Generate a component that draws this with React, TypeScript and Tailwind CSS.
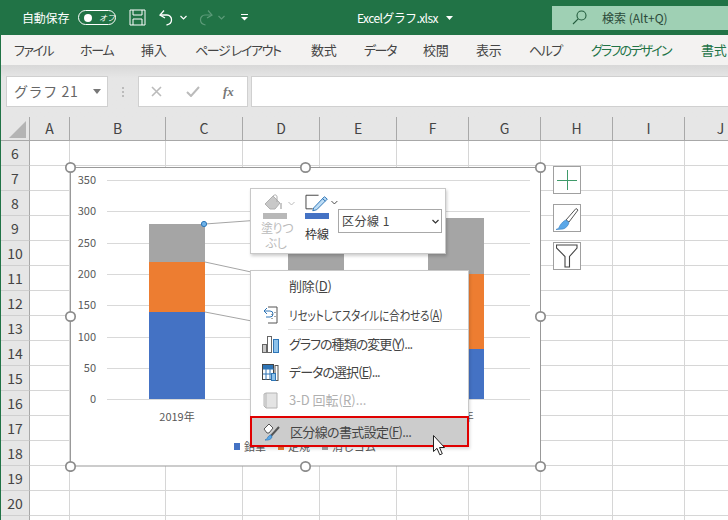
import { ReactNode } from 'react';

const FONT = "font-['Noto_Sans_CJK_JP','Noto_Sans',sans-serif]";

const tabs = [
  { label: 'ファイル', w: 'w-[38px]', t: 'tracking-[-1.5px]' },
  { label: 'ホーム', w: 'w-[33px]', t: 'tracking-[-1.3px]' },
  { label: '挿入', w: 'w-[26px]', t: 'tracking-[-0.3px]' },
  { label: 'ページ レイアウト', w: 'w-[88px]', t: 'tracking-[-1.4px]' },
  { label: '数式', w: 'w-[25px]', t: 'tracking-[-0.3px]' },
  { label: 'データ', w: 'w-[31px]', t: 'tracking-[-1.5px]' },
  { label: '校閲', w: 'w-[25px]', t: 'tracking-[-0.3px]' },
  { label: '表示', w: 'w-[25px]', t: 'tracking-[-0.3px]' },
  { label: 'ヘルプ', w: 'w-[34px]', t: 'tracking-[-1.5px]' },
  { label: 'グラフのデザイン', w: 'w-[82px]', t: 'tracking-[-1.8px]', green: true },
  { label: '書式', w: 'w-[26px]', t: 'tracking-[-0.3px]', green: true },
];

const columns = [
  { name: 'A', w: 'w-[40px]' },
  { name: 'B', w: 'w-[96px]' },
  { name: 'C', w: 'w-[77px]' },
  { name: 'D', w: 'w-[77px]' },
  { name: 'E', w: 'w-[77px]' },
  { name: 'F', w: 'w-[72px]' },
  { name: 'G', w: 'w-[72px]' },
  { name: 'H', w: 'w-[72px]' },
  { name: 'I', w: 'w-[72px]' },
  { name: 'J', w: 'w-[72px]' },
];

const rows = [6, 7, 8, 9, 10, 11, 12, 13, 14, 15, 16, 17, 18, 19, 20, 21];

const axis = [
  { label: '350', y: 180 },
  { label: '300', y: 211 },
  { label: '250', y: 243 },
  { label: '200', y: 274 },
  { label: '150', y: 305 },
  { label: '100', y: 337 },
  { label: '50', y: 368 },
  { label: '0', y: 399 },
];

// the middle bar sits behind the menu, its label is never seen
const bars = [
  { x: 149, gray: 224, orange: 262, blue: 312, label: '2019年' },
  { x: 288, gray: 240, orange: 300, blue: 349, label: '' },
  { x: 428, gray: 218, orange: 274, blue: 349, label: '2021年' },
];

const handles = [
  [70, 167], [305, 167], [540, 167],
  [70, 316], [540, 316],
  [70, 466], [305, 466], [540, 466],
];

function TitleBar() {
  return (
    <div className="flex h-[35px] items-center bg-[#217346] text-white">
      <span className="ml-[21px] w-[48px] whitespace-nowrap text-[12px] tracking-[-0.2px]">自動保存</span>
      <div className="ml-[8px] flex h-[15px] w-[38px] items-center rounded-full border border-white pl-[5px]">
        <div className="size-[8px] rounded-full bg-white" />
        <span className="ml-[7px] text-[8px] italic leading-none">オフ</span>
      </div>
      <svg className="ml-[13px]" width="17" height="17" viewBox="0 0 17 17" fill="none" stroke="white" strokeWidth="1">
        <path d="M1 1H16V16H1Z" />
        <path d="M4 1V6H13V1M4 16V10H13V16" />
      </svg>
      <svg className="ml-[12px]" width="17" height="17" viewBox="0 0 17 17" fill="none" stroke="white" strokeWidth="1.3">
        <path d="M6 1.5 2 6l5 3" />
        <path d="M2.5 6H9a4.6 4.6 0 0 1 4.5 5c0 3-2.5 4.500-5 5" />
      </svg>
      <svg className="ml-[5px]" width="7" height="5" viewBox="0 0 7 5" fill="none" stroke="white" strokeWidth="1.2">
        <path d="M.5 1 3.500 4 6.500 1" />
      </svg>
      <svg className="ml-[10px]" width="17" height="17" viewBox="0 0 17 17" fill="none" stroke="#5b9a78" strokeWidth="1.2">
        <path d="M11 1.500 15 6l-5 3" />
        <path d="M14.500 6H8a4.600 4.600 0 0 0-4.500 5c0 3 2.500 4.500 5 5" />
      </svg>
      <svg className="ml-[4px]" width="7" height="5" viewBox="0 0 7 5" fill="none" stroke="#5b9a78" strokeWidth="1.2">
        <path d="M.5 1 3.500 4 6.500 1" />
      </svg>
      <svg className="ml-[16px]" width="7" height="7" viewBox="0 0 7 7" fill="white">
        <path d="M0 0H7V1H0Z" />
        <path d="M0 3H7L3.500 6.500Z" />
      </svg>
      <span className="ml-[109px] w-[83px] whitespace-nowrap text-[12px] tracking-[-0.6px]">Excelグラフ.xlsx</span>
      <svg className="ml-[6px]" width="7" height="4" viewBox="0 0 7 4" fill="white">
        <path d="M0 0H7L3.500 4Z" />
      </svg>
      <div className="ml-[99px] flex h-[24px] flex-1 items-center bg-[#9fd0b4] text-[#2b4a39]">
        <svg className="ml-[20px]" width="15" height="15" viewBox="0 0 15 15" fill="none" stroke="#235c3d" strokeWidth="1.1">
          <circle cx="9.500" cy="5.500" r="4.500" />
          <path d="M6.200 8.800 1 14" />
        </svg>
        <span className="ml-[15px] whitespace-nowrap text-[12px]">検索 (Alt+Q)</span>
      </div>
    </div>
  );
}

function RibbonTabs() {
  return (
    <div className="flex h-[30px] items-center gap-x-[28px] overflow-hidden bg-[#f3f2f1] pl-[13px]">
      {tabs.map((tab) => (
        <span
          key={tab.label}
          className={`${tab.w} ${tab.t} shrink-0 whitespace-nowrap text-[13px] [font-feature-settings:'palt'] ${
            tab.green ? 'text-[#217346]' : 'text-[#444]'
          }`}
        >
          {tab.label}
        </span>
      ))}
    </div>
  );
}

function FormulaBar() {
  return (
    <div className="flex h-[52px] items-center bg-gradient-to-b from-[#d8d8d8] via-[#e6e6e6] via-[25%] to-[#e6e6e6] pl-[5px] pt-[1px]">
      <div className="flex h-[31px] w-[102px] items-center justify-between border border-[#d0d0d0] bg-white pl-[7px] pr-[6px]">
        <span className="whitespace-nowrap text-[14px] tracking-[0.6px] text-[#666]">グラフ 21</span>
        <svg width="8" height="5" viewBox="0 0 8 5" fill="#777">
          <path d="M0 0H8L4 5Z" />
        </svg>
      </div>
      <div className="ml-[14px] flex w-[2px] flex-col gap-[2px]">
        <div className="h-[2px] bg-[#bbb]" />
        <div className="h-[2px] bg-[#bbb]" />
        <div className="h-[2px] bg-[#bbb]" />
      </div>
      <div className="ml-[14px] flex h-[31px] w-[110px] items-center border border-[#d0d0d0] bg-white">
        <svg className="ml-[12px]" width="11" height="11" viewBox="0 0 11 11" stroke="#bbb" strokeWidth="1.6">
          <path d="M1 1 10 10M10 1 1 10" />
        </svg>
        <svg className="ml-[24px]" width="14" height="11" viewBox="0 0 14 11" fill="none" stroke="#bbb" strokeWidth="2">
          <path d="M1 6 5 10 13 1" />
        </svg>
        <span className="ml-[23px] font-['Liberation_Serif',serif] text-[13px] font-bold italic text-[#777]">fx</span>
      </div>
      <div className="ml-[3px] h-[31px] flex-1 border-y border-l border-[#d0d0d0] bg-white" />
    </div>
  );
}

function Grid() {
  return (
    <div className="flex flex-col">
      <div className="flex h-[24px] bg-[#e6e6e6]">
        <div className="flex w-[29px] shrink-0 items-end justify-end border-b border-r border-[#a8a8a8] pb-[2px] pr-[3px]">
          <div className="size-[17px] bg-[#b4b4b4] [clip-path:polygon(100%_0,100%_100%,0_100%)]" />
        </div>
        {columns.map((c) => (
          <div
            key={c.name}
            className={`${c.w} flex shrink-0 items-center justify-center border-b border-r border-[#a8a8a8] text-[14px] text-[#444]`}
          >
            {c.name}
          </div>
        ))}
      </div>
      {rows.map((r) => (
        <div key={r} className="flex h-[25px]">
          <div className="flex w-[29px] shrink-0 items-center justify-center border-b border-r border-b-[#cfcfcf] border-r-[#a8a8a8] bg-[#e6e6e6] text-[14px] text-[#444]">
            {r < 21 ? r : ''}
          </div>
          {columns.map((c) => (
            <div key={c.name} className={`${c.w} shrink-0 border-b border-r border-[#d6d6d6] bg-white`} />
          ))}
        </div>
      ))}
    </div>
  );
}

function Chart() {
  return (
    <svg
      className="absolute left-[62px] top-[43px]"
      width="486"
      height="312"
      viewBox="63 160 486 312"
      fontFamily="'Noto Sans CJK JP', sans-serif"
    >
      <rect x="70.500" y="167.500" width="470" height="298.500" fill="white" stroke="#999" />
      {axis.map((a) => (
        <g key={a.label}>
          <line x1="107" x2="530" y1={a.y + 0.5} y2={a.y + 0.5} stroke="#d9d9d9" />
          <text x="96" y={a.y + 4} textAnchor="end" fontSize="11" fill="#595959">
            {a.label}
          </text>
        </g>
      ))}
      {bars.map((b) => (
        <g key={b.x}>
          <rect x={b.x} y={b.gray} width="56" height={b.orange - b.gray} fill="#a5a5a5" />
          <rect x={b.x} y={b.orange} width="56" height={b.blue - b.orange} fill="#ed7d31" />
          <rect x={b.x} y={b.blue} width="56" height={399 - b.blue} fill="#4472c4" />
          {b.label && (
            <text x={b.x + 28} y="421" textAnchor="middle" fontSize="11" fill="#595959">
              {b.label}
            </text>
          )}
        </g>
      ))}
      <line x1="205" y1="224" x2="288" y2="218" stroke="#a5a5a5" />
      <line x1="205" y1="262" x2="288" y2="280" stroke="#a5a5a5" />
      <line x1="205" y1="312" x2="288" y2="328" stroke="#a5a5a5" />
      <circle cx="204" cy="224" r="2.600" fill="#6db3ea" stroke="#2e75b6" />
      <rect x="234" y="443" width="6" height="7" fill="#4472c4" />
      <text x="244" y="451" fontSize="11" fill="#595959">鉛筆</text>
      <rect x="278" y="443" width="6" height="7" fill="#ed7d31" />
      <text x="288" y="451" fontSize="11" fill="#595959">定規</text>
      <rect x="322" y="443" width="6" height="7" fill="#a5a5a5" />
      <text x="332" y="451" fontSize="11" fill="#595959">消しゴム</text>
      {handles.map(([x, y]) => (
        <circle key={`${x}-${y}`} cx={x + 0.5} cy={y + 0.5} r="4.700" fill="white" stroke="#8c8c8c" strokeWidth="1.700" />
      ))}
    </svg>
  );
}

function SideButton({ children }: { children: ReactNode }) {
  return <div className="flex size-[28px] items-center justify-center border border-[#a0a0a0] bg-white">{children}</div>;
}

function ChartButtons() {
  return (
    <div className="absolute left-[552px] top-[49px] flex flex-col gap-[10px]">
      <SideButton>
        <svg width="20" height="20" viewBox="0 0 20 20" stroke="#3f9a6a">
          <path d="M10.500 0V20M0 10.500H20" />
        </svg>
      </SideButton>
      <SideButton>
        <svg width="24" height="24" viewBox="0 0 24 24">
          <path d="M11 14 21 2.500 23 4 14 16Z" fill="white" stroke="#555" />
          <path d="M1 23.500c3-.5 3-2.500 4-4 1.500-2.500 4-5 6-5.500l3 2.500c-.5 3-3.500 6-6 6.500Z" fill="#5aa7e8" stroke="#3d85c6" strokeWidth=".7" />
        </svg>
      </SideButton>
      <SideButton>
        <svg width="22" height="24" viewBox="0 0 22 24" fill="none" stroke="#444" strokeWidth="1.100">
          <path d="M.5 1H21V4L13.500 12.500V23H9V12.500L.5 4Z" />
        </svg>
      </SideButton>
    </div>
  );
}

function MiniToolbar() {
  return (
    <div className="absolute left-[249px] top-[71px] flex h-[66px] w-[196px] border border-[#c8c8c8] bg-white pl-[10px] shadow-[1px_2px_3px_rgba(0,0,0,0.2)]">
      <div className="flex w-[42px] flex-col pt-[5px]">
        <div className="flex items-center">
          <svg width="26" height="18" viewBox="0 0 26 18">
            <path d="M4 10 12 2l7 7-5 6H9Z" fill="#c8c8c8" stroke="#b0b0b0" />
            <path d="M12 2c2-2 4-1 4 1v5" fill="none" stroke="#aaa" />
            <path d="M19 9v6h2V9Z" fill="#c8c8c8" />
          </svg>
          <svg className="ml-[1px]" width="7" height="5" viewBox="0 0 7 5" fill="none" stroke="#bbb">
            <path d="M.5 1 3.500 4 6.500 1" />
          </svg>
        </div>
        <div className="ml-[2px] mt-[1px] h-[6px] w-[24px] bg-[#b8b8b8]" />
        <div className="mt-[1px] w-[30px] whitespace-nowrap text-center text-[12px] leading-[15px] tracking-[-0.4px] text-[#bbb] [font-feature-settings:'palt']">
          塗りつ
          <br />
          ぶし
        </div>
      </div>
      <div className="ml-[2px] flex w-[33px] flex-col pt-[5px]">
        <div className="flex items-start">
          <svg width="26" height="18" viewBox="0 0 26 18">
            <path d="M14 1H1V15H8" fill="none" stroke="#444" />
            <path d="M9 14 20 2.500l3 2.500L12 16l-4 1Z" fill="#bcdcf5" stroke="#2e75b6" />
            <path d="M18 4.500 21 7" stroke="#2e75b6" />
          </svg>
          <svg className="ml-[1px] mt-[6px]" width="7" height="5" viewBox="0 0 7 5" fill="none" stroke="#444">
            <path d="M.5 1 3.500 4 6.500 1" />
          </svg>
        </div>
        <div className="mt-[1px] h-[6px] w-[24px] bg-[#4472c4]" />
        <div className="mt-[7px] w-[24px] whitespace-nowrap text-center text-[12px] leading-[15px] text-[#333]">枠線</div>
      </div>
      <div className="mt-[20px] flex h-[24px] w-[104px] items-center justify-between border border-[#a8a8a8] pl-[3px] pr-[2px]">
        <span className="whitespace-nowrap text-[12px] tracking-[0.5px] text-[#444]">区分線 1</span>
        <svg width="7" height="5" viewBox="0 0 7 5" fill="none" stroke="#333" strokeWidth="1.200">
          <path d="M.5 1 3.500 4 6.500 1" />
        </svg>
      </div>
    </div>
  );
}

function MenuRow({
  icon,
  disabled,
  h,
  fit,
  children,
}: {
  icon?: ReactNode;
  disabled?: boolean;
  h: string;
  fit: string;
  children: ReactNode;
}) {
  return (
    <div className={`${h} flex items-center`}>
      <div className="flex w-[38px] shrink-0 justify-center pl-[1px]">{icon}</div>
      <span
        className={`${fit} origin-left whitespace-nowrap text-[13px] [font-feature-settings:'palt'] ${
          disabled ? 'text-[#b0b0b0]' : 'text-[#444]'
        }`}
      >
        {children}
      </span>
    </div>
  );
}

function ContextMenu() {
  return (
    <div className="absolute left-[249px] top-[153px] w-[219px] border border-[#c8c8c8] bg-white shadow-[1px_2px_3px_rgba(0,0,0,0.15)]">
      <MenuRow h="h-[29px]" fit="tracking-[-0.2px]">
        削除(<u>D</u>)
      </MenuRow>
      <MenuRow
        h="h-[29px]"
        fit="tracking-[-0.2px] scale-x-[0.815]"
        icon={
          <svg width="15" height="18" viewBox="0 0 15 18" fill="none">
            <path d="M5 1H14V17H5" stroke="#555" />
            <path d="M1 5 4 2M1 5l3 3M1 5h6a2 2 0 0 1 0 6H3" stroke="#2e75b6" />
            <path d="M9 8v1M9 12v1M12 6v1M12 10v1" stroke="#555" />
          </svg>
        }
      >
        リセットしてスタイルに合わせる(<u>A</u>)
      </MenuRow>
      <div className="ml-[37px] h-px bg-[#dcdcdc]" />
      <MenuRow
        h="h-[28px]"
        fit="tracking-[-0.95px]"
        icon={
          <svg width="17" height="17" viewBox="0 0 17 17">
            <rect x=".5" y="8.500" width="4" height="8" fill="#c8c8c8" stroke="#666" />
            <rect x="5.500" y=".5" width="4" height="16" fill="white" stroke="#666" />
            <rect x="11.500" y="3.500" width="5" height="13" fill="#8ec2ea" stroke="#2e75b6" />
          </svg>
        }
      >
        グラフの種類の変更(<u>Y</u>)...
      </MenuRow>
      <MenuRow
        h="h-[28px]"
        fit="tracking-[-0.95px]"
        icon={
          <svg width="17" height="17" viewBox="0 0 17 17">
            <rect x=".5" y=".5" width="11" height="15" fill="white" stroke="#444" />
            <rect x="1" y="1" width="10" height="4" fill="#2e75b6" />
            <path d="M4 1v15M8 1v15M1 5h11M1 10h11" stroke="#2e75b6" />
            <rect x="13" y="1.500" width="3" height="15" fill="white" stroke="#555" />
            <rect x="9.500" y="9.500" width="4" height="7" fill="#8ec2ea" stroke="#2e75b6" />
          </svg>
        }
      >
        データの選択(<u>E</u>)...
      </MenuRow>
      <MenuRow
        h="h-[28px]"
        fit="tracking-[0px]"
        disabled
        icon={
          <svg width="15" height="17" viewBox="0 0 15 17" fill="none" stroke="#b4b4b4">
            <path d="M3 1H14V16H3L1 14V2Z" fill="#e4e4e4" />
            <path d="M3 1V16" />
          </svg>
        }
      >
        3-D 回転(<u>R</u>)...
      </MenuRow>
      <div className="h-[2px]" />
      <div className="-mx-px -mb-px border-[2px] border-[#e00000] bg-[#cccccc]">
        <MenuRow
          h="h-[27px]"
          fit="tracking-[-0.65px]"
          icon={
            <svg width="18" height="18" viewBox="0 0 18 18" fill="none">
              <path d="M1 6 6 1l4 4-4 5H4Z" fill="white" stroke="#555" />
              <path d="M7 14 16 4" stroke="#555" strokeWidth="2" />
              <path d="M2 17c2-.5 2-2 3-3 1-1.500 2-2 3-2l1 2c-.5 2-3 3.500-7 3Z" fill="#5aa7e8" stroke="#2e75b6" strokeWidth=".7" />
            </svg>
          }
        >
          区分線の書式設定(<u>F</u>)...
        </MenuRow>
      </div>
    </div>
  );
}

function Cursor() {
  return (
    <svg className="absolute left-[432px] top-[318px]" width="13" height="21" viewBox="0 0 13 21">
      <path d="M.5.5V16.500L4 13.300 6.800 19.800 9.300 18.700 6.500 12.500H11.500Z" fill="white" stroke="#222" />
    </svg>
  );
}

export default function App() {
  return (
    <div className={`${FONT} h-[520px] w-[728px] overflow-hidden border-l border-[#217346] bg-white`}>
      <TitleBar />
      <RibbonTabs />
      <FormulaBar />
      <div className="relative">
        <Grid />
        <Chart />
        <ChartButtons />
        <MiniToolbar />
        <ContextMenu />
        <Cursor />
      </div>
    </div>
  );
}
